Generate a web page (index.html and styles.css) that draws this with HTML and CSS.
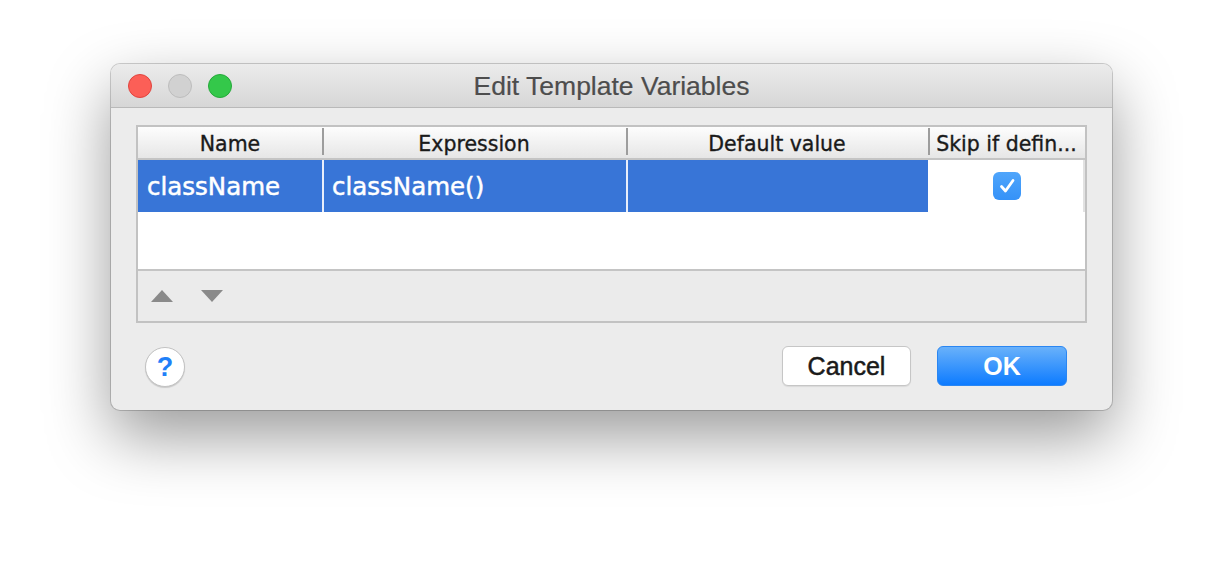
FILE: index.html
```html
<!DOCTYPE html>
<html>
<head>
<meta charset="utf-8">
<link rel="stylesheet" href="styles.css">
</head>
<body>
<div class="window">
  <div class="titlebar">
    <div class="lights">
      <span class="light red"></span>
      <span class="light gray"></span>
      <span class="light green"></span>
    </div>
    <div class="title">Edit Template Variables</div>
    <div></div>
  </div>
  <div class="content">
    <div class="table">
      <div class="thead">
        <div class="th">Name</div>
        <div class="th">Expression</div>
        <div class="th">Default value</div>
        <div class="th">Skip if defin...</div>
      </div>
      <div class="row">
        <div class="td sel">className</div>
        <div class="td sel">className()</div>
        <div class="td sel"></div>
        <div class="td check-cell">
          <span class="checkbox">
            <svg width="28" height="28" viewBox="0 0 28 28"><path d="M8.5 14.5 L12.5 19 L20 8.5" fill="none" stroke="#fff" stroke-width="2.8" stroke-linecap="round" stroke-linejoin="round"/></svg>
          </span>
        </div>
      </div>
      <div class="tbody-empty"></div>
      <div class="toolbar">
        <svg class="tri" width="22" height="12" viewBox="0 0 22 12"><path d="M0 12 L11 0 L22 12 Z" fill="#8a8a8a"/></svg>
        <svg class="tri" width="22" height="12" viewBox="0 0 22 12"><path d="M0 0 L22 0 L11 12 Z" fill="#8a8a8a"/></svg>
      </div>
    </div>
    <div class="buttons">
      <div class="help">?</div>
      <div class="spacer"></div>
      <div class="btn cancel">Cancel</div>
      <div class="btn ok">OK</div>
    </div>
  </div>
</div>
</body>
</html>
```

FILE: styles.css
```css
html, body {
  margin: 0;
  padding: 0;
  background: #ffffff;
}
body {
  width: 1224px;
  height: 570px;
  overflow: hidden;
  font-family: "DejaVu Sans", sans-serif;
}
.window {
  margin: 64px 0 0 111px;
  width: 1001px;
  height: 346px;
  box-sizing: border-box;
  background: #ececec;
  border-radius: 9px;
  box-shadow: 0 0 0 1px rgba(0,0,0,0.18), 0 26px 64px rgba(0,0,0,0.4);
  overflow: hidden;
}
.titlebar {
  height: 43px;
  border-bottom: 1px solid #b9b9b9;
  background: linear-gradient(#ececec, #d6d6d6);
  display: grid;
  grid-template-columns: 1fr auto 1fr;
  align-items: center;
}
.lights {
  display: flex;
  gap: 16px;
  padding-left: 17px;
  padding-top: 1px;
}
.light {
  width: 24px;
  height: 24px;
  border-radius: 50%;
  box-sizing: border-box;
}
.red { background: #fc5f57; border: 1px solid #e0443e; }
.gray { background: #d1d1d1; border: 1px solid #bdbdbd; }
.green { background: #34c84a; border: 1px solid #25a93a; }
.title {
  font-family: "Liberation Sans", Arial, sans-serif;
  font-size: 26.5px;
  color: #4d4d4d;
  padding-top: 2px;
  -webkit-text-stroke: 0.2px #4d4d4d;
}
.content {
  padding: 17px 25px 24px;
}
.table {
  height: 198px;
  box-sizing: border-box;
  border: 2px solid #c2c2c2;
  background: #ffffff;
  display: flex;
  flex-direction: column;
}
.thead, .row {
  display: grid;
  grid-template-columns: 184px 304px 302px 1fr;
}
.thead {
  height: 31px;
  border-bottom: 2px solid #c4c4c4;
  background: linear-gradient(#fdfdfd, #e6e6e6);
}
.th {
  font-size: 20.5px;
  color: #1a1a1a;
  -webkit-text-stroke: 0.35px #1a1a1a;
  display: flex;
  align-items: center;
  justify-content: center;
  padding-top: 2px;
  position: relative;
  white-space: nowrap;
  overflow: hidden;
}
.th + .th::before {
  content: "";
  position: absolute;
  left: 0;
  top: 1px;
  bottom: 3px;
  width: 2px;
  background: #9d9d9d;
}
.row {
  height: 52px;
}
.td {
  font-size: 24.5px;
  display: flex;
  align-items: center;
  padding-left: 9px;
  white-space: nowrap;
  overflow: hidden;
}
.td.sel {
  background: #3875d7;
  color: #ffffff;
  -webkit-text-stroke: 0.5px #ffffff;
}
.td + .td.sel {
  border-left: 2px solid #e8eefa;
}
.row .td:nth-child(2) {
  padding-left: 8px;
}
.check-cell {
  background: #ffffff;
  justify-content: center;
  padding-left: 0;
  border-left: 2px solid #ffffff;
  border-right: 2px solid #e2e2e2;
}
.checkbox {
  width: 28px;
  height: 28px;
  border-radius: 6px;
  background: linear-gradient(#4fa5fb, #3592f8);
  display: block;
  margin-left: 1px;
}
.checkbox svg { display: block; }
.tbody-empty {
  height: 57px;
}
.toolbar {
  height: 50px;
  border-top: 2px solid #c4c4c4;
  background: #ebebeb;
  display: flex;
  align-items: flex-start;
  gap: 28px;
  padding-left: 13px;
}
.tri {
  display: block;
  margin-top: 19px;
}
.buttons {
  margin-top: 23px;
  height: 40px;
  display: flex;
  align-items: center;
  padding-left: 9px;
  padding-right: 20px;
}
.help {
  width: 40px;
  height: 40px;
  box-sizing: border-box;
  border-radius: 50%;
  background: #ffffff;
  border: 1px solid #c2c2c2;
  box-shadow: 0 1px 1px rgba(0,0,0,0.15);
  color: #1f80f8;
  font-family: "Liberation Sans", Arial, sans-serif;
  font-size: 27px;
  font-weight: bold;
  display: flex;
  align-items: center;
  justify-content: center;
  margin-top: 2px;
}
.spacer { flex: 1; }
.btn {
  width: 130px;
  height: 40px;
  box-sizing: border-box;
  border-radius: 6px;
  font-family: "Liberation Sans", Arial, sans-serif;
  font-size: 25px;
  display: flex;
  align-items: center;
  justify-content: center;
}
.cancel {
  width: 129px;
  background: #ffffff;
  border: 1px solid #c6c6c6;
  box-shadow: 0 1px 1px rgba(0,0,0,0.08);
  color: #1a1a1a;
  -webkit-text-stroke: 0.5px #1a1a1a;
  margin-right: 26px;
}
.ok {
  background: linear-gradient(#69b1fa, #0d7bff);
  border: 1px solid #2a86f2;
  color: #ffffff;
  font-weight: bold;
}
```
